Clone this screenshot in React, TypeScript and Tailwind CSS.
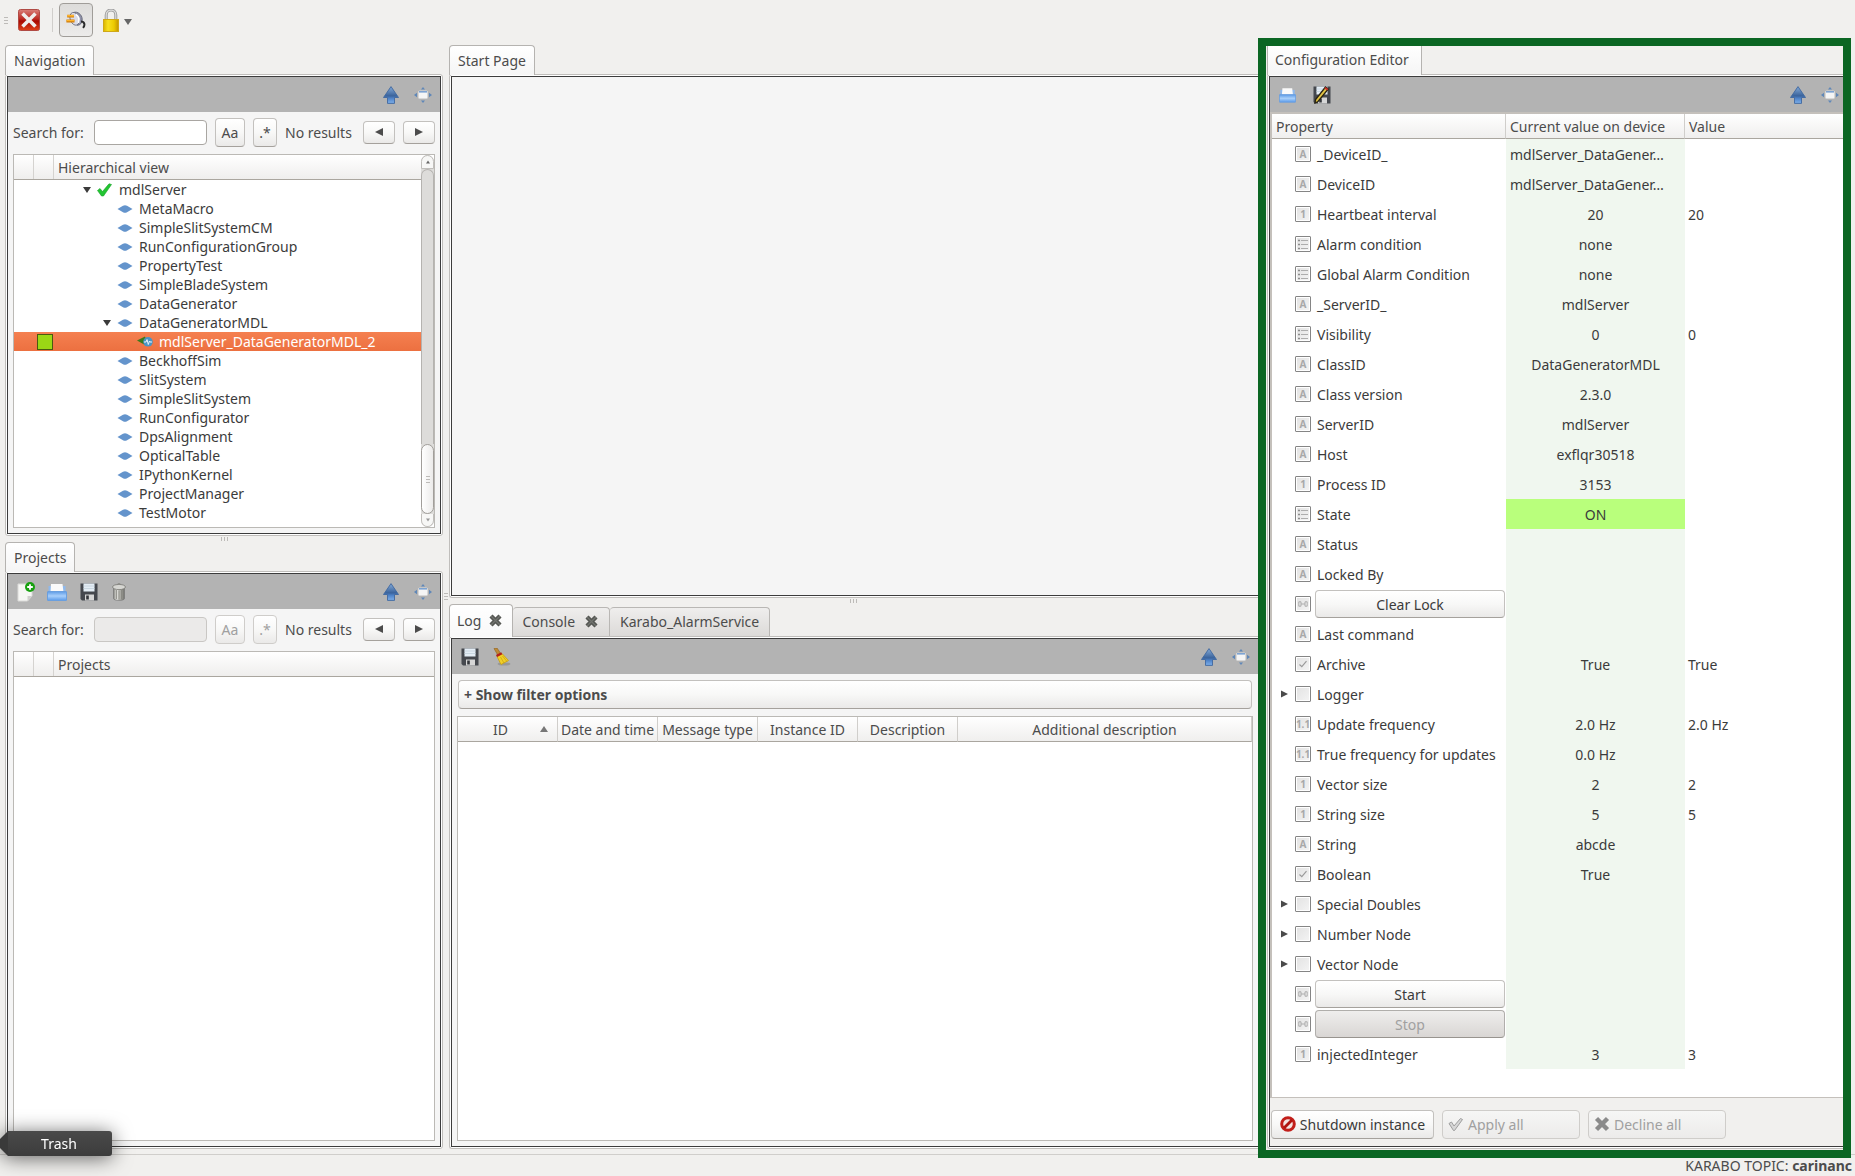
import React from 'react';

type SvgProps = { className?: string };

function CloseAppIcon() {
  return (
    <svg width="22" height="22" viewBox="0 0 22 22" aria-hidden="true">
      <defs>
        <linearGradient id="closeRed" x1="0" y1="0" x2="0" y2="1">
          <stop offset="0" stopColor="#d9807a" />
          <stop offset="0.45" stopColor="#bd2a22" />
          <stop offset="0.55" stopColor="#a80a02" />
          <stop offset="1" stopColor="#e0421a" />
        </linearGradient>
      </defs>
      <rect x="0.5" y="0.5" width="21" height="21" rx="2" fill="url(#closeRed)" stroke="#b04a44" />
      <path d="M5.8 5.8L16.2 16.2M16.2 5.8L5.8 16.2" stroke="#f0eeec" strokeWidth="3.6" strokeLinecap="square" />
    </svg>
  );
}

function PlugIcon() {
  return (
    <svg width="20" height="18" viewBox="0 0 20 18" aria-hidden="true">
      <path d="M7.5 1.5C11.5 0 16 3.5 16.2 8C16.4 12 14 14.5 11 14.2Z" fill="#8f91a8" stroke="#5c5e70" strokeWidth="0.8" />
      <ellipse cx="8.6" cy="7.8" rx="4.4" ry="6.6" transform="rotate(-20 8.6 7.8)" fill="#dcdde8" stroke="#6a6c7e" strokeWidth="0.8" />
      <path d="M10 3.5C12.5 5 13.5 8.5 12.5 12" stroke="#ffffff" strokeWidth="1.6" fill="none" />
      <path d="M1.2 5.2H8M0.4 10H8.5" stroke="#cf7c08" strokeWidth="2.8" />
      <path d="M1.2 4.8H8M0.6 9.6H8.5" stroke="#ffb52e" strokeWidth="1.4" />
      <path d="M15 10.5C18.5 10.5 19.5 14 17 16.8" stroke="#2a2a2a" strokeWidth="2" fill="none" />
    </svg>
  );
}

function LockIcon() {
  return (
    <svg width="16" height="23" viewBox="0 0 16 23" aria-hidden="true">
      <defs>
        <linearGradient id="lockGold" x1="0" y1="0" x2="1" y2="0">
          <stop offset="0" stopColor="#d9b400" />
          <stop offset="0.3" stopColor="#f8e020" />
          <stop offset="0.7" stopColor="#ecca00" />
          <stop offset="1" stopColor="#c49400" />
        </linearGradient>
      </defs>
      <path d="M3.2 11V6C3.2 -0.6 12.8 -0.6 12.8 6V11" fill="none" stroke="#9a9a9a" strokeWidth="3" />
      <path d="M3.2 11V6C3.2 -0.6 12.8 -0.6 12.8 6V11" fill="none" stroke="#dcdcdc" strokeWidth="1.2" />
      <rect x="0.5" y="10.5" width="15" height="12" fill="url(#lockGold)" stroke="#cfa818" />
    </svg>
  );
}

function UpArrowIcon() {
  return (
    <svg width="16" height="18" viewBox="0 0 16 18" aria-hidden="true">
      <defs>
        <linearGradient id="upBlue" x1="0" y1="0" x2="0" y2="1">
          <stop offset="0" stopColor="#86acd8" />
          <stop offset="0.55" stopColor="#3a639c" />
          <stop offset="0.7" stopColor="#4f83c8" />
          <stop offset="1" stopColor="#7fb0ea" />
        </linearGradient>
      </defs>
      <path d="M8 0.6L15.5 11.5H11.5V17.4H4.5V11.5H0.5Z" fill="url(#upBlue)" stroke="#3f689f" strokeWidth="0.9" strokeLinejoin="round" />
    </svg>
  );
}

function UndockIcon() {
  return (
    <svg width="18" height="16" viewBox="0 0 18 16" aria-hidden="true">
      <rect x="4.5" y="4" width="9" height="7.5" rx="1" fill="#f5f5f5" stroke="#d8d8d8" />
      <rect x="5" y="4" width="8" height="1.6" fill="#7da3d2" />
      <path d="M9 0L11 2.6H7ZM9 16L11 13.4H7ZM0 8L3 5.8V10.2ZM18 8L15 5.8V10.2Z" fill="#5f87b8" />
    </svg>
  );
}

function NewDocIcon() {
  return (
    <svg width="18" height="20" viewBox="0 0 18 20" aria-hidden="true">
      <path d="M1 2H15V14L10.5 19H1Z" fill="#f6f6f4" stroke="#dadad8" />
      <path d="M10.5 19V14H15Z" fill="#cfcfcd" />
      <circle cx="13" cy="5" r="5" fill="#18a010" />
      <path d="M13 2.2V7.8M10.2 5H15.8" stroke="#fff" strokeWidth="1.8" />
    </svg>
  );
}

function OpenTrayIcon({ className = 'h-[18px] w-5' }: SvgProps) {
  return (
    <svg viewBox="0 0 20 18" className={className} aria-hidden="true">
      <defs>
        <linearGradient id="trayBlue" x1="0" y1="0" x2="0" y2="1">
          <stop offset="0" stopColor="#5d9be6" />
          <stop offset="0.5" stopColor="#a8cffa" />
          <stop offset="1" stopColor="#5b9bea" />
        </linearGradient>
      </defs>
      <path d="M1.5 3H18.5V9H1.5Z" fill="#8fb9ec" />
      <path d="M4 1H15.5L16.5 9H3.5Z" fill="#fafafa" />
      <rect x="0.5" y="8.5" width="19" height="9" rx="0.5" fill="url(#trayBlue)" stroke="#6a9fdf" />
    </svg>
  );
}

function FloppyIcon({ pencil = false }: { pencil?: boolean }) {
  return (
    <svg width="18" height="18" viewBox="0 0 18 18" aria-hidden="true">
      <path d="M0.5 0.5H17.5V17.5H2L0.5 16Z" fill="#45484e" />
      <rect x="3.5" y="0.5" width="11" height="8" fill="#e4edf5" />
      <path d="M3.5 3H14.5M3.5 5.5H14.5" stroke="#c2d0dc" strokeWidth="0.8" />
      <rect x="5" y="11.5" width="9" height="6" fill="#d6d6d6" />
      <rect x="6.2" y="12.5" width="2.6" height="4" fill="#33363b" />
      {pencil && (
        <>
          <path d="M12.5 1L15.3 3L5 15.5L2 17L2.6 13.6Z" fill="#e2c443" stroke="#2a2413" strokeWidth="1.3" />
          <path d="M12.5 1L15.3 3L14.2 4.5L11.3 2.4Z" fill="#c9302a" />
        </>
      )}
    </svg>
  );
}

function TrashCanIcon() {
  return (
    <svg width="14" height="18" viewBox="0 0 14 18" aria-hidden="true">
      <defs>
        <linearGradient id="canGrey" x1="0" y1="0" x2="1" y2="0">
          <stop offset="0" stopColor="#83837e" />
          <stop offset="0.3" stopColor="#e4e4e0" />
          <stop offset="0.65" stopColor="#a8a8a2" />
          <stop offset="1" stopColor="#70706b" />
        </linearGradient>
      </defs>
      <path d="M1.5 5H12.5V15.5C12.5 18 1.5 18 1.5 15.5Z" fill="url(#canGrey)" stroke="#777" strokeWidth="0.7" />
      <path d="M4.5 7V16M7 7.5V16.5M9.5 7V16" stroke="#85857f" strokeWidth="0.8" />
      <ellipse cx="7" cy="4" rx="6.5" ry="2.6" fill="#d6d6d2" stroke="#7b7b76" strokeWidth="0.8" />
      <path d="M5 2.2C5 0 9 0 9 2.2" stroke="#8a8a85" fill="none" />
    </svg>
  );
}

function BroomIcon() {
  return (
    <svg width="18" height="18" viewBox="0 0 18 18" aria-hidden="true">
      <ellipse cx="11" cy="16" rx="6.5" ry="1.6" fill="#989898" />
      <path d="M1 0.5L4 0L8 6L5 7.5Z" fill="#c08a35" stroke="#8a5e1c" strokeWidth="0.6" />
      <path d="M4 8.5L9 5.5L15.5 12.5L8 16.5Z" fill="#f0cf28" stroke="#c9a010" strokeWidth="0.8" />
      <path d="M7.5 9L11 15M9.5 8L14 13.5" stroke="#c9a010" strokeWidth="0.7" />
      <path d="M3.5 8L8.8 5.2" stroke="#b3201a" strokeWidth="2.4" />
    </svg>
  );
}

function TabCloseIcon() {
  return (
    <svg width="13" height="13" viewBox="0 0 13 13" aria-hidden="true">
      <path d="M2 2L11 11M11 2L2 11" stroke="#555753" strokeWidth="4.4" />
      <path d="M2 2L11 11M11 2L2 11" stroke="#72746f" strokeWidth="1.2" />
    </svg>
  );
}

function Triangle({ dir, className = '' }: { dir: 'left' | 'right' | 'down' | 'up' } & SvgProps) {
  const d = {
    left: 'M8 0V8L0 4Z',
    right: 'M0 0V8L8 4Z',
    down: 'M0 1H8L4 7Z',
    up: 'M0 7H8L4 1Z',
  }[dir];
  return (
    <svg width="8" height="8" viewBox="0 0 8 8" className={className} aria-hidden="true">
      <path d={d} fill="currentColor" />
    </svg>
  );
}

function DiamondIcon() {
  return (
    <svg width="16" height="8" viewBox="0 0 16 8" aria-hidden="true">
      <path d="M0.5 4L6 0.8Q8 -0.2 10 0.8L15.5 4L10 7.2Q8 8.2 6 7.2Z" fill="#6494cc" />
    </svg>
  );
}

function CheckIcon() {
  return (
    <svg width="15" height="14" viewBox="0 0 15 14" aria-hidden="true">
      <path d="M0.5 7.5L3 5.5L5.5 8.5L12 0.8L14.5 1.5L6.5 13H4.5Z" fill="#22c532" stroke="#14a024" strokeWidth="0.6" />
    </svg>
  );
}

function DeviceIcon() {
  return (
    <svg width="16" height="11" viewBox="0 0 16 11" aria-hidden="true">
      <path d="M0 4.5L8 0.5L10 6L8 9Z" fill="#3c7a1c" />
      <circle cx="11" cy="5.8" r="4.8" fill="#4a94c4" />
      <path d="M7 6H9L10 3.5L11.3 8.5L12.5 5L13 6H15" stroke="#e8f4fa" fill="none" strokeWidth="1" />
    </svg>
  );
}

const softButton =
  'flex items-center justify-center rounded-[4px] border border-[#c3c1be] border-b-[#a5a19c] bg-linear-to-b from-white via-[#f8f8f7] to-[#eae9e8]';

function Grip({ vertical = false }: { vertical?: boolean }) {
  return (
    <span className={vertical ? 'flex flex-col gap-[2px]' : 'flex gap-[2px]'} aria-hidden="true">
      {[0, 1, 2].map((i) => (
        <span key={i} className={vertical ? 'h-px w-1 bg-[#bdbbb8]' : 'h-1 w-px bg-[#bdbbb8]'} />
      ))}
    </span>
  );
}

function SingleTab({ label }: { label: string }) {
  return (
    <div role="tablist" className="flex">
      <button role="tab" aria-selected="true" className="relative -mb-px h-[30px] rounded-t-[4px] border border-b-0 border-[#b5b3b0] bg-linear-to-b from-white to-[#f5f5f5] px-2 pb-px">
        {label}
      </button>
    </div>
  );
}

function Frame({ children }: { children?: React.ReactNode }) {
  return (
    <div className="flex min-h-0 flex-1 flex-col rounded-[3px] border border-[#c0bebb] bg-white p-px">
      <div className="flex min-h-0 flex-1 flex-col border border-[#3c3c3c] bg-[#f5f5f5]">{children}</div>
    </div>
  );
}

function PanelBar({ children, className = 'pr-2' }: { children?: React.ReactNode } & SvgProps) {
  return (
    <div className={`flex h-[35px] shrink-0 items-center gap-[14px] bg-[#b3b3b3] pl-[9px] ${className}`}>
      {children}
      <div className="ml-auto flex items-center gap-[15px]">
        <button aria-label="Move up"><UpArrowIcon /></button>
        <button aria-label="Undock"><UndockIcon /></button>
      </div>
    </div>
  );
}

function SearchRow({ id, disabled = false }: { id: string; disabled?: boolean }) {
  return (
    <div className="flex h-[42px] shrink-0 items-center gap-2 px-[5px] pb-[2px]">
      <label htmlFor={id} className="w-[73px] whitespace-nowrap">Search for:</label>
      <input
        id={id}
        disabled={disabled}
        className="h-[25px] w-0 min-w-0 flex-1 rounded-[4px] border border-[#a9a6a2] bg-white px-1 outline-none disabled:border-[#c9c7c4] disabled:bg-[#ebeae9]"
      />
      <button disabled={disabled} aria-label="Match case" className={`${softButton} h-[29px] w-[30px] disabled:border-[#cfcdca] disabled:text-[#a0a0a0]`}>Aa</button>
      <button disabled={disabled} aria-label="Regular expression" className={`${softButton} h-[29px] w-6 disabled:border-[#cfcdca] disabled:text-[#a0a0a0]`}>.*</button>
      <span className="w-[70px] whitespace-nowrap">No results</span>
      <button aria-label="Previous result" className={`${softButton} h-[23px] w-8 text-[#4c4c4c]`}><Triangle dir="left" /></button>
      <button aria-label="Next result" className={`${softButton} h-[23px] w-8 text-[#4c4c4c]`}><Triangle dir="right" /></button>
    </div>
  );
}

function TreeHeader({ label }: { label: string }) {
  return (
    <div className="flex h-[25px] shrink-0 items-stretch border-b border-[#aaa69f] bg-linear-to-b from-white to-[#efeeed]">
      <span className="w-5 border-r border-[#d5d3d0]" />
      <span className="w-5 border-r border-[#d5d3d0]" />
      <span className="flex items-center pl-1">{label}</span>
    </div>
  );
}

type Node = { name: string; level: 0 | 1 | 2; open?: boolean; selected?: boolean };

const nodes: Node[] = [
  { name: 'mdlServer', level: 0, open: true },
  { name: 'MetaMacro', level: 1 },
  { name: 'SimpleSlitSystemCM', level: 1 },
  { name: 'RunConfigurationGroup', level: 1 },
  { name: 'PropertyTest', level: 1 },
  { name: 'SimpleBladeSystem', level: 1 },
  { name: 'DataGenerator', level: 1 },
  { name: 'DataGeneratorMDL', level: 1, open: true },
  { name: 'mdlServer_DataGeneratorMDL_2', level: 2, selected: true },
  { name: 'BeckhoffSim', level: 1 },
  { name: 'SlitSystem', level: 1 },
  { name: 'SimpleSlitSystem', level: 1 },
  { name: 'RunConfigurator', level: 1 },
  { name: 'DpsAlignment', level: 1 },
  { name: 'OpticalTable', level: 1 },
  { name: 'IPythonKernel', level: 1 },
  { name: 'ProjectManager', level: 1 },
  { name: 'TestMotor', level: 1 },
];

const levelWidth = ['w-10', 'w-[60px]', 'w-20'];

function TreeRow({ node }: { node: Node }) {
  return (
    <li
      role="treeitem"
      aria-selected={!!node.selected}
      className={`flex h-[19px] items-center leading-[19px] ${node.selected ? 'bg-linear-to-b from-[#f58050] to-[#ec7040] text-white' : 'text-[#3b3b3b]'}`}
    >
      <span className="flex w-[43px] justify-end pr-1">
        {node.selected && <span className="size-4 border border-[#4a5a10] bg-[#9bd715]" />}
      </span>
      <span className={`flex justify-end pr-[6px] ${levelWidth[node.level]}`}>
        {node.open && <Triangle dir="down" />}
      </span>
      <span className="flex w-[22px] items-center">
        {node.level === 0 ? <CheckIcon /> : node.level === 1 ? <DiamondIcon /> : <DeviceIcon />}
      </span>
      <span>{node.name}</span>
    </li>
  );
}

function ScrollBar() {
  return (
    <div className="flex w-[13px] shrink-0 flex-col rounded-full bg-[#dddcda]" aria-hidden="true">
      <span className="flex h-[14px] items-center justify-center rounded-t-full border border-[#c0bebb] bg-[#f7f7f6] text-[#666]">
        <Triangle dir="up" className="size-1" />
      </span>
      <span className="flex-1 rounded-t-full border-x border-t border-[#b5b3b0]" />
      <span className="flex h-[70px] items-center justify-center rounded-full border border-[#a19e9a] bg-linear-to-r from-white to-[#ecebea]">
        <Grip vertical />
      </span>
      <span className="flex h-[13px] items-center justify-center rounded-b-full border border-t-0 border-[#c0bebb] bg-[#f7f7f6] text-[#999]">
        <Triangle dir="down" className="size-1" />
      </span>
    </div>
  );
}

function NavigationPanel() {
  return (
    <section className="flex shrink-0 flex-col">
      <SingleTab label="Navigation" />
      <Frame>
        <PanelBar />
        <SearchRow id="nav-search" />
        <div className="mx-[5px] mb-[5px] flex border border-[#bbb9b5] bg-white">
          <div className="min-w-0 flex-1">
            <TreeHeader label="Hierarchical view" />
            <ul role="tree" className="pb-[5px]">
              {nodes.map((n) => <TreeRow key={n.name} node={n} />)}
            </ul>
          </div>
          <ScrollBar />
        </div>
      </Frame>
    </section>
  );
}

function ProjectsPanel() {
  return (
    <section className="flex min-h-0 flex-1 flex-col">
      <SingleTab label="Projects" />
      <Frame>
        <PanelBar>
          <button aria-label="New project"><NewDocIcon /></button>
          <button aria-label="Open project" className="-ml-[2px]"><OpenTrayIcon /></button>
          <button aria-label="Save project" className="-ml-px"><FloppyIcon /></button>
          <button aria-label="Delete project"><TrashCanIcon /></button>
        </PanelBar>
        <SearchRow id="project-search" disabled />
        <div className="mx-[5px] mb-[5px] flex-1 border border-[#bbb9b5] bg-white">
          <TreeHeader label="Projects" />
        </div>
      </Frame>
    </section>
  );
}

function CenterFrame({ children }: { children?: React.ReactNode }) {
  return (
    <div className="flex min-h-0 flex-1 flex-col rounded-l-[3px] border border-r-0 border-[#c0bebb] bg-white py-px pl-px">
      <div className="flex min-h-0 flex-1 flex-col border border-r-0 border-[#3c3c3c] bg-[#f5f5f5]">{children}</div>
    </div>
  );
}

function LogPanel() {
  const head = 'overflow-hidden whitespace-nowrap border-r border-[#d0cecb] p-0 text-center font-normal';
  return (
    <section className="flex min-h-0 flex-[545] flex-col">
      <div role="tablist" className="flex items-end">
        <div className="relative -mb-px flex h-[33px] items-center gap-2 rounded-t-[4px] border border-b-0 border-[#b5b3b0] bg-linear-to-b from-white to-[#f8f8f8] pr-[10px] pb-[2px] pl-[7px]">
          <button role="tab" aria-selected="true">Log</button>
          <button aria-label="Close Log"><TabCloseIcon /></button>
        </div>
        <div className="flex h-[29px] items-center gap-[10px] rounded-t-[4px] border border-b-0 border-l-0 border-[#b9b7b4] bg-linear-to-b from-[#efeeed] to-[#dcdad8] px-[9px] pr-[11px] pb-px">
          <button role="tab" aria-selected="false">Console</button>
          <button aria-label="Close Console"><TabCloseIcon /></button>
        </div>
        <button role="tab" aria-selected="false" className="h-[29px] rounded-t-[4px] border border-b-0 border-l-0 border-[#b9b7b4] bg-linear-to-b from-[#efeeed] to-[#dcdad8] px-[10px] pb-px">
          Karabo_AlarmService
        </button>
      </div>
      <CenterFrame>
        <PanelBar className="pr-2">
          <button aria-label="Save log"><FloppyIcon /></button>
          <button aria-label="Clear log"><BroomIcon /></button>
        </PanelBar>
        <button className={`${softButton} mx-[6px] mt-[6px] h-[29px] shrink-0 justify-start! px-[5px] font-bold`}>+ Show filter options</button>
        <div className="mx-[5px] mt-[7px] mb-[5px] flex-1 border border-[#bbb9b5] bg-white">
          <table className="w-full table-fixed border-separate border-spacing-0">
            <colgroup>
              <col className="w-[100px]" />
              <col className="w-[100px]" />
              <col className="w-[100px]" />
              <col className="w-[100px]" />
              <col className="w-[100px]" />
              <col />
            </colgroup>
            <thead>
              <tr className="h-[25px] bg-linear-to-b from-white to-[#efeeed] *:border-b *:border-b-[#aaa69f]">
                <th className={head}>
                  <span className="flex items-center pr-[9px]">
                    <span className="flex-1 pl-[3px]">ID</span>
                    <Triangle dir="up" className="text-[#777]" />
                  </span>
                </th>
                <th className={head}>Date and time</th>
                <th className={head}>Message type</th>
                <th className={head}>Instance ID</th>
                <th className={head}>Description</th>
                <th className={head}>Additional description</th>
              </tr>
            </thead>
          </table>
        </div>
      </CenterFrame>
    </section>
  );
}

type Kind = 'A' | '1' | '1.1' | 'list' | 'check' | 'node' | 'slot';

function KindIcon({ kind }: { kind: Kind }) {
  return (
    <span className="flex size-4 shrink-0 items-center justify-center overflow-hidden rounded-[1px] border border-[#858585] bg-linear-to-br from-[#e2e2e2] to-[#f4f4f4] text-[10px] leading-[12px] font-bold text-[#a8a8a8] inset-ring inset-ring-white">
      {(kind === 'A' || kind === '1' || kind === '1.1') && kind}
      {kind === 'list' && (
        <svg width="12" height="12" viewBox="0 0 12 12" aria-hidden="true">
          <path d="M1 2.5H3M1 6.5H3M1 10.5H3" stroke="#8d8d8d" strokeWidth="1.4" />
          <path d="M4 2.5H11M4 6.5H11M4 10.5H11" stroke="#adadad" />
        </svg>
      )}
      {kind === 'check' && (
        <svg width="10" height="8" viewBox="0 0 10 8" aria-hidden="true">
          <path d="M1.5 4.5L3.8 6.6L8.5 1.2" stroke="#9a9a9a" strokeWidth="1.2" fill="none" />
        </svg>
      )}
      {kind === 'slot' && (
        <svg width="10" height="6" viewBox="0 0 10 6" aria-hidden="true">
          <path d="M0.8 0.8H3V5.2H0.8ZM7 0.8H9.2V5.2H7ZM3 3H7" stroke="#a6a6a6" strokeWidth="0.9" fill="none" />
        </svg>
      )}
    </span>
  );
}

type Prop = { kind: Kind; name: string; current?: string; value?: string; on?: boolean; off?: boolean; elided?: boolean };

const props: Prop[] = [
  { kind: 'A', name: '_DeviceID_', current: 'mdlServer_DataGener…', elided: true },
  { kind: 'A', name: 'DeviceID', current: 'mdlServer_DataGener…', elided: true },
  { kind: '1', name: 'Heartbeat interval', current: '20', value: '20' },
  { kind: 'list', name: 'Alarm condition', current: 'none' },
  { kind: 'list', name: 'Global Alarm Condition', current: 'none' },
  { kind: 'A', name: '_ServerID_', current: 'mdlServer' },
  { kind: 'list', name: 'Visibility', current: '0', value: '0' },
  { kind: 'A', name: 'ClassID', current: 'DataGeneratorMDL' },
  { kind: 'A', name: 'Class version', current: '2.3.0' },
  { kind: 'A', name: 'ServerID', current: 'mdlServer' },
  { kind: 'A', name: 'Host', current: 'exflqr30518' },
  { kind: '1', name: 'Process ID', current: '3153' },
  { kind: 'list', name: 'State', current: 'ON', on: true },
  { kind: 'A', name: 'Status' },
  { kind: 'A', name: 'Locked By' },
  { kind: 'slot', name: 'Clear Lock' },
  { kind: 'A', name: 'Last command' },
  { kind: 'check', name: 'Archive', current: 'True', value: 'True' },
  { kind: 'node', name: 'Logger' },
  { kind: '1.1', name: 'Update frequency', current: '2.0 Hz', value: '2.0 Hz' },
  { kind: '1.1', name: 'True frequency for updates', current: '0.0 Hz' },
  { kind: '1', name: 'Vector size', current: '2', value: '2' },
  { kind: '1', name: 'String size', current: '5', value: '5' },
  { kind: 'A', name: 'String', current: 'abcde' },
  { kind: 'check', name: 'Boolean', current: 'True' },
  { kind: 'node', name: 'Special Doubles' },
  { kind: 'node', name: 'Number Node' },
  { kind: 'node', name: 'Vector Node' },
  { kind: 'slot', name: 'Start' },
  { kind: 'slot', name: 'Stop', off: true },
  { kind: '1', name: 'injectedInteger', current: '3', value: '3' },
];

function PropertyRow({ p }: { p: Prop }) {
  return (
    <tr className="h-[30px]">
      <td className="p-0">
        <div className="flex h-[30px] items-center pl-[9px] whitespace-nowrap">
          <span className="w-[14px] shrink-0">
            {p.kind === 'node' && (
              <button aria-label={`Expand ${p.name}`} className="block text-[#4a4a4a]"><Triangle dir="right" className="w-[7px]" /></button>
            )}
          </span>
          <KindIcon kind={p.kind} />
          {p.kind === 'slot' ? (
            <button
              disabled={p.off}
              className={
                p.off
                  ? 'mr-px ml-1 h-7 flex-1 rounded-[4px] border border-[#b0aeab] border-b-[#98948f] bg-linear-to-b from-[#efeeed] to-[#d9d6d4] text-[#a0a0a0]'
                  : `${softButton} mr-px ml-1 h-7 flex-1`
              }
            >
              {p.name}
            </button>
          ) : (
            <span className="ml-[6px]">{p.name}</span>
          )}
        </div>
      </td>
      <td className={`p-0 whitespace-nowrap ${p.elided ? 'pl-1 text-left' : 'text-center'} ${p.on ? 'bg-[#b9ff7c]' : 'bg-[#f0f7ef]'}`}>{p.current}</td>
      <td className="p-0 pl-[3px]">{p.value}</td>
    </tr>
  );
}

function ConfigurationEditor() {
  return (
    <aside className="relative z-10 mr-1 -mb-1 flex w-[593px] shrink-0 flex-col border-8 border-[#0b6623] bg-[#f1f0ee] pb-px pl-px">
      <div role="tablist" className="flex">
        <button role="tab" aria-selected="true" className="relative -mb-px h-[29px] border-x border-[#b5b3b0] bg-linear-to-b from-white to-[#f5f5f5] pr-3 pb-[2px] pl-[7px]">
          Configuration Editor
        </button>
      </div>
      <CenterFrame>
        <PanelBar className="pr-1">
          <button aria-label="Load configuration"><OpenTrayIcon className="h-4 w-[17px]" /></button>
          <button aria-label="Save configuration" className="ml-[3px]"><FloppyIcon pencil /></button>
        </PanelBar>
        <div className="min-h-0 flex-1 border-t-2 border-b border-l-2 border-[#c4c0bb] bg-white text-[#3b3b3b]">
          <table className="w-full table-fixed border-separate border-spacing-0">
            <colgroup>
              <col className="w-[234px]" />
              <col className="w-[179px]" />
              <col />
            </colgroup>
            <thead>
              <tr className="h-[25px] bg-linear-to-b from-white to-[#efeeed] text-left text-[#4c4c4c] *:border-b *:border-b-[#aaa69f]">
                <th className="border-r border-r-[#d0cecb] p-0 pl-1 font-normal">Property</th>
                <th className="border-r border-r-[#d0cecb] p-0 pl-1 font-normal whitespace-nowrap">Current value on device</th>
                <th className="p-0 pl-1 font-normal">Value</th>
              </tr>
            </thead>
            <tbody>
              {props.map((p) => <PropertyRow key={p.name} p={p} />)}
            </tbody>
          </table>
        </div>
        <div className="flex h-12 shrink-0 items-center gap-2 bg-[#f1f0ee] pt-1 pl-px">
          <button className={`${softButton} h-[29px] w-[163px] gap-1 text-[#3b3b3b]`}>
            <svg width="16" height="16" viewBox="0 0 16 16" aria-hidden="true">
              <circle cx="8" cy="8" r="6.3" fill="#f3e4e2" stroke="#c21f1a" strokeWidth="3" />
              <path d="M12 4L4 12" stroke="#b01510" strokeWidth="2.8" />
            </svg>
            Shutdown instance
          </button>
          <button disabled className="flex h-[29px] w-[138px] items-center gap-1 rounded-[4px] border border-[#cfcdca] bg-linear-to-b from-[#f6f6f5] to-[#ecebea] px-[5px] text-[#a0a0a0]">
            <svg width="16" height="15" viewBox="0 0 16 15" aria-hidden="true">
              <path d="M1 6.5L3.5 5L6 9L12.5 1.5L14.5 2.5L6.5 13.5H5.5Z" fill="#d6d6d6" stroke="#9d9d9d" />
            </svg>
            Apply all
          </button>
          <button disabled className="flex h-[29px] w-[138px] items-center gap-1 rounded-[4px] border border-[#cfcdca] bg-linear-to-b from-[#f6f6f5] to-[#ecebea] px-[5px] text-[#a0a0a0]">
            <svg width="16" height="16" viewBox="0 0 16 16" aria-hidden="true">
              <path d="M2.5 2.5L13.5 13.5M13.5 2.5L2.5 13.5" stroke="#8b8b8b" strokeWidth="4.4" />
            </svg>
            Decline all
          </button>
        </div>
      </CenterFrame>
    </aside>
  );
}

export default function App() {
  return (
    <div className="relative flex h-screen min-h-[1176px] flex-col overflow-hidden bg-[#f1f0ee] font-['Noto_Sans',sans-serif] text-[14px] leading-[19px] text-[#4c4c4c]">
      <header className="flex h-[38px] shrink-0 items-center pt-[2px] pl-1">
        <Grip vertical />
        <button aria-label="Quit" className="ml-[10px]"><CloseAppIcon /></button>
        <span className="ml-3 h-6 w-px bg-[#d0cecb]" />
        <button aria-label="Disconnect" aria-pressed="true" className="ml-[6px] flex size-[34px] items-center justify-center rounded-[4px] border border-[#a09d99] bg-linear-to-b from-[#dddcda] to-[#ecebea]">
          <PlugIcon />
        </button>
        <button aria-label="Access level" className="ml-[10px] flex items-center gap-[5px] text-[#666]">
          <LockIcon />
          <Triangle dir="down" className="mt-1" />
        </button>
      </header>

      <main className="flex min-h-0 flex-1">
        <div className="flex w-[438px] shrink-0 flex-col pt-[7px] pb-[5px] ml-[5px]">
          <NavigationPanel />
          <div className="flex h-[6px] shrink-0 items-center justify-center"><Grip /></div>
          <ProjectsPanel />
        </div>
        <div className="flex w-[6px] shrink-0 items-center justify-center"><Grip vertical /></div>
        <div className="flex min-w-0 flex-1 flex-col pt-[7px] pb-[5px]">
          <section className="flex min-h-0 flex-[553] flex-col">
            <SingleTab label="Start Page" />
            <CenterFrame />
          </section>
          <div className="flex h-[6px] shrink-0 items-center justify-center"><Grip /></div>
          <LogPanel />
        </div>
        <ConfigurationEditor />
      </main>

      <footer className="flex h-[22px] shrink-0 items-center justify-end border-t border-[#d0cecb] pr-[3px] whitespace-nowrap">
        KARABO TOPIC:&nbsp;<strong className="font-bold">carinanc</strong>
      </footer>

      <div role="tooltip" className="absolute bottom-5 left-0 z-20 flex h-[25px] w-28 items-center drop-shadow-[0_2px_10px_rgba(0,0,0,0.6)]">
        <svg width="8" height="25" viewBox="0 0 8 25" aria-hidden="true">
          <path d="M8 0L0 8V17L8 25Z" fill="#3a3a3a" />
        </svg>
        <span className="flex h-full flex-1 items-center justify-center rounded-r-[3px] bg-linear-to-b from-[#4a4a4a] to-[#3c3c3c] pr-[2px] text-white">Trash</span>
      </div>
    </div>
  );
}
